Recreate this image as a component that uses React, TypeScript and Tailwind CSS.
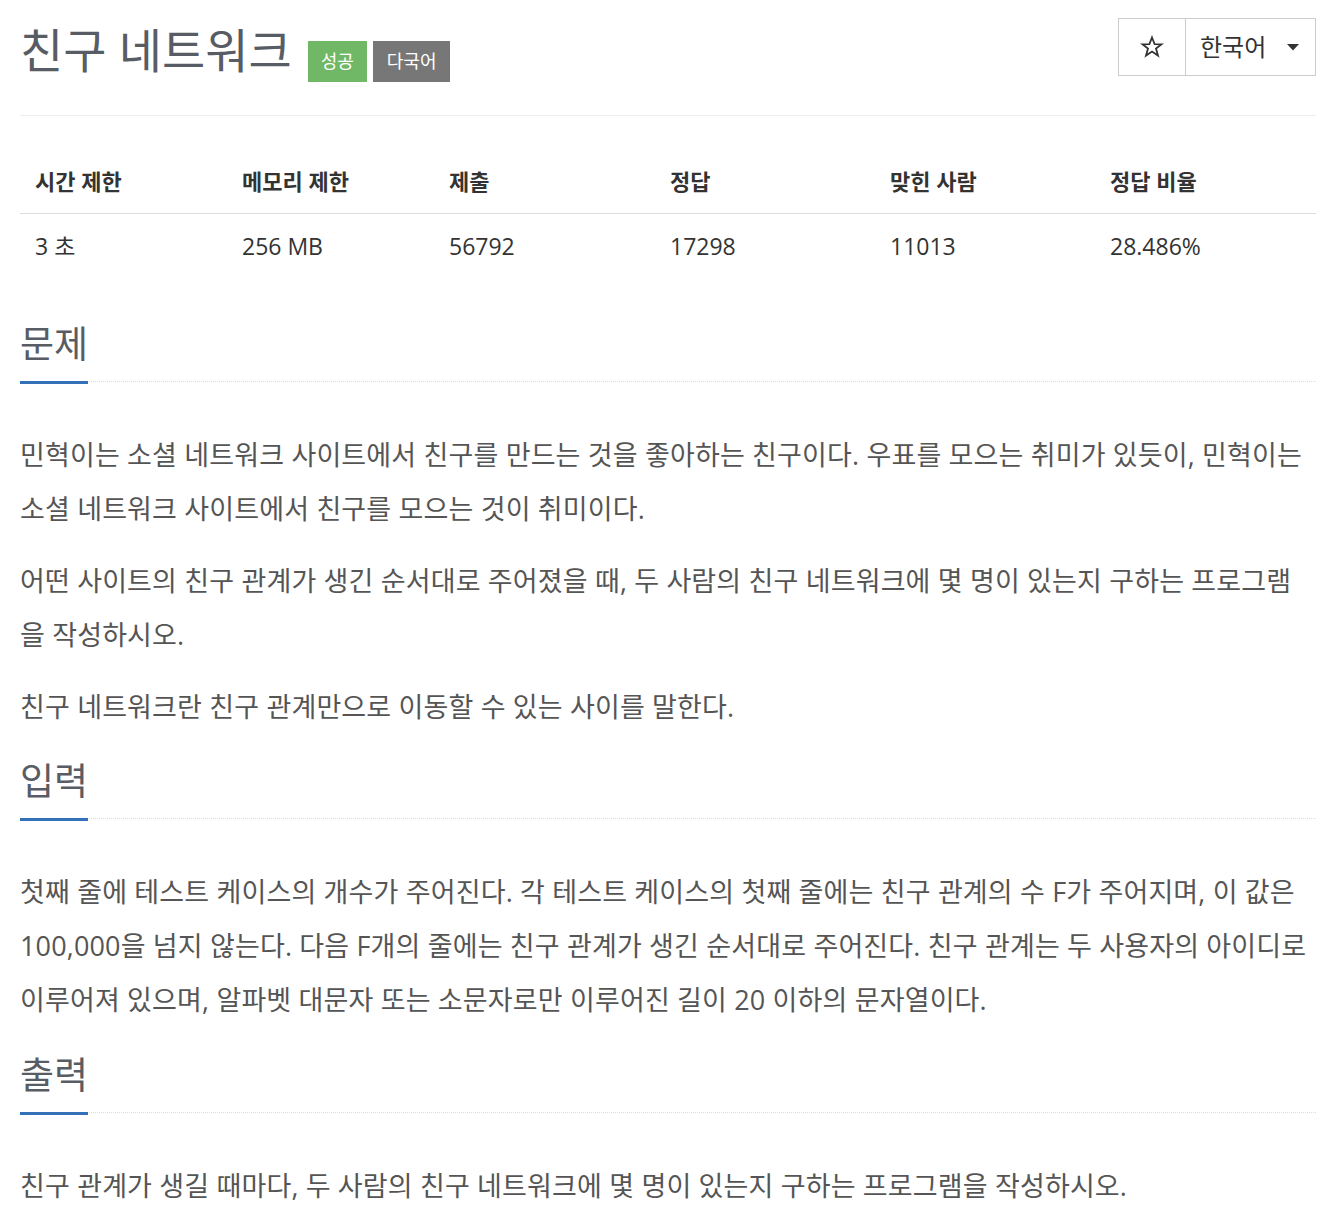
import React from "react";

const FONT = { fontFamily: '"Open Sans", "Noto Sans CJK KR", sans-serif' };

function Heading({ children, top }: { children: React.ReactNode; top: string }) {
  return (
    <div className={`border-b border-dotted border-[#dcdcdc] ${top}`}>
      <h2 className="inline-block text-[37px] leading-[48px] pb-[13px] text-[#585c64] border-b-[3px] border-[#3271b8] mb-[-3px] font-normal">
        {children}
      </h2>
    </div>
  );
}

function Para({ children, first }: { children: React.ReactNode; first?: boolean }) {
  return (
    <p className={`text-[27px] leading-[54px] tracking-[0.15px] text-[#555] whitespace-nowrap ${first ? "mt-[46px]" : "mt-[18px]"}`}>
      {children}
    </p>
  );
}

function Star() {
  return (
    <svg width="24" height="24" viewBox="0 0 24 24" fill="none" stroke="#333" strokeWidth="1.8" strokeLinejoin="miter">
      <path d="M12 2.5 L14.6 9.2 L21.6 9.3 L16 13.6 L18 20.6 L12 16.5 L6 20.6 L8 13.6 L2.4 9.3 L9.4 9.2 Z" />
    </svg>
  );
}

export default function App() {
  const headers = ["시간 제한", "메모리 제한", "제출", "정답", "맞힌 사람", "정답 비율"];
  const values = ["3 초", "256 MB", "56792", "17298", "11013", "28.486%"];
  return (
    <div className="bg-white min-h-[1230px] pl-5 pr-[26px] pt-5" style={FONT}>
      {/* Header */}
      <div className="flex items-start justify-between border-b border-[#eeeeee] pb-[33px]">
        <div className="flex items-start">
          <h1 className="text-[47px] leading-[60px] text-[#585c64] font-normal">친구 네트워크</h1>
          <span className="ml-4 mt-[21px] h-[41px] px-[13px] flex items-center bg-[#70b865] text-white text-[18px]">성공</span>
          <span className="ml-[6px] mt-[21px] h-[41px] px-[14px] flex items-center bg-[#777777] text-white text-[18px]">다국어</span>
        </div>
        <div className="-mt-[2px] flex h-[58px] border border-[#cccccc] text-[#333]">
          <div className="w-[67px] flex items-center justify-center border-r border-[#cccccc]">
            <Star />
          </div>
          <div className="w-[129px] flex items-center pl-[14px]">
            <span className="text-[24px]">한국어</span>
            <svg className="ml-auto mr-[16px]" width="12" height="7" viewBox="0 0 12 7">
              <path d="M0 0 L12 0 L6 6.5 Z" fill="#333" />
            </svg>
          </div>
        </div>
      </div>

      {/* Stats table */}
      <div className="mt-[34px] grid grid-cols-[207px_207px_221px_220px_220px_1fr] text-[#333]">
        {headers.map((h) => (
          <div key={h} className="h-[64px] flex items-center pl-[15px] text-[22px] font-bold border-b border-[#dddddd]">
            {h}
          </div>
        ))}
        {values.map((v) => (
          <div key={v} className="h-[65px] flex items-center pl-[15px] text-[23px]">
            {v}
          </div>
        ))}
      </div>

      {/* 문제 */}
      <Heading top="mt-[41px]">문제</Heading>
      <Para first>
        민혁이는 소셜 네트워크 사이트에서 친구를 만드는 것을 좋아하는 친구이다. 우표를 모으는 취미가 있듯이, 민혁이는
        <br />
        소셜 네트워크 사이트에서 친구를 모으는 것이 취미이다.
      </Para>
      <Para>
        어떤 사이트의 친구 관계가 생긴 순서대로 주어졌을 때, 두 사람의 친구 네트워크에 몇 명이 있는지 구하는 프로그램
        <br />
        을 작성하시오.
      </Para>
      <Para>친구 네트워크란 친구 관계만으로 이동할 수 있는 사이를 말한다.</Para>

      {/* 입력 */}
      <Heading top="mt-[23px]">입력</Heading>
      <Para first>
        첫째 줄에 테스트 케이스의 개수가 주어진다. 각 테스트 케이스의 첫째 줄에는 친구 관계의 수 F가 주어지며, 이 값은
        <br />
        100,000을 넘지 않는다. 다음 F개의 줄에는 친구 관계가 생긴 순서대로 주어진다. 친구 관계는 두 사용자의 아이디로
        <br />
        이루어져 있으며, 알파벳 대문자 또는 소문자로만 이루어진 길이 20 이하의 문자열이다.
      </Para>

      {/* 출력 */}
      <Heading top="mt-[24px]">출력</Heading>
      <Para first>친구 관계가 생길 때마다, 두 사람의 친구 네트워크에 몇 명이 있는지 구하는 프로그램을 작성하시오.</Para>
    </div>
  );
}
